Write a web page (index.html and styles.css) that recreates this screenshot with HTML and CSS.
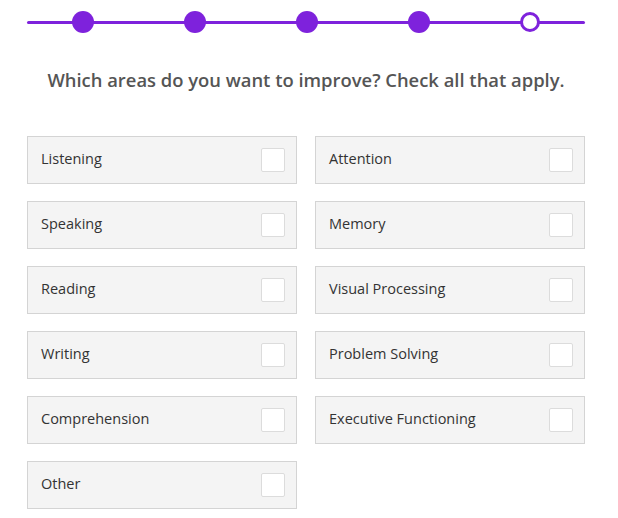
FILE: index.html
```html
<!DOCTYPE html>
<html>
<head>
<meta charset="utf-8">
<link rel="stylesheet" href="styles.css">
</head>
<body>
<div class="page">
  <div class="progress">
    <span class="dot"></span>
    <span class="dot"></span>
    <span class="dot"></span>
    <span class="dot"></span>
    <span class="dot current"></span>
  </div>
  <h1 class="question">Which areas do you want to improve? Check all that apply.</h1>
  <div class="options">
    <label class="option"><span class="label">Listening</span><span class="box"></span></label>
    <label class="option"><span class="label">Attention</span><span class="box"></span></label>
    <label class="option"><span class="label">Speaking</span><span class="box"></span></label>
    <label class="option"><span class="label">Memory</span><span class="box"></span></label>
    <label class="option"><span class="label">Reading</span><span class="box"></span></label>
    <label class="option"><span class="label">Visual Processing</span><span class="box"></span></label>
    <label class="option"><span class="label">Writing</span><span class="box"></span></label>
    <label class="option"><span class="label">Problem Solving</span><span class="box"></span></label>
    <label class="option"><span class="label">Comprehension</span><span class="box"></span></label>
    <label class="option"><span class="label">Executive Functioning</span><span class="box"></span></label>
    <label class="option"><span class="label">Other</span><span class="box"></span></label>
  </div>
</div>
</body>
</html>
```
FILE: styles.css
```css
* { box-sizing: border-box; }
html, body { margin: 0; padding: 0; background: #fff; }
body { font-family: "Open Sans", "Liberation Sans", sans-serif; }
.page { width: 618px; padding: 0 33px 0 27px; }
.progress {
  position: relative;
  height: 22px;
  margin-top: 11px;
  display: flex;
  justify-content: space-between;
  padding: 0 45px 0 45px;
  align-items: center;
}
.progress::before {
  content: "";
  position: absolute;
  left: 0; right: 0; top: 10px;
  height: 3px;
  border-radius: 2px;
  background: #7e22dc;
}
.dot {
  position: relative;
  width: 22px; height: 22px;
  border-radius: 50%;
  background: #7e22dc;
}
.dot.current {
  background: #fff;
  border: 3px solid #7e22dc;
  width: 20px; height: 20px;
}
.question {
  margin: 34px 0 0 0;
  text-align: center;
  font-size: 18.4px;
  font-weight: 600;
  color: #555;
  line-height: 26px;
}
.options {
  margin-top: 43px;
  display: grid;
  grid-template-columns: 270px 270px;
  column-gap: 18px;
  row-gap: 17px;
}
.option {
  height: 48px;
  display: flex;
  align-items: center;
  justify-content: space-between;
  background: #f4f4f4;
  border: 1px solid #d4d4d4;
  padding: 0 11px 0 13px;
}
.label {
  font-size: 14.5px;
  color: #333;
  padding-bottom: 3px;
}
.box {
  width: 24px; height: 24px;
  background: #fff;
  border: 1px solid #dcdcdc;
  border-radius: 2px;
}
```
